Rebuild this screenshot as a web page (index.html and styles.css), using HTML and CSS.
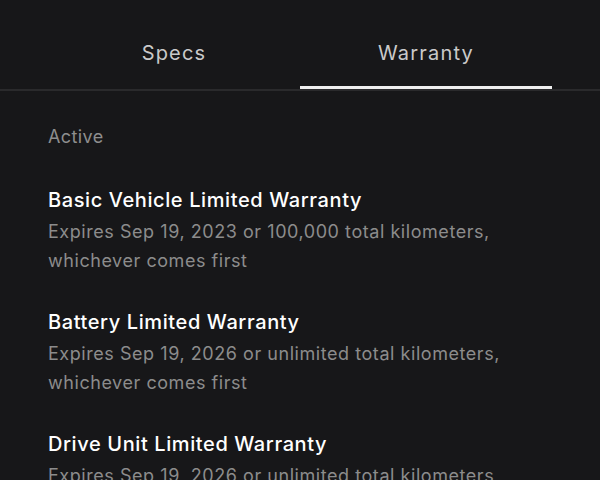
FILE: index.html
```html
<!DOCTYPE html>
<html>
<head>
<meta charset="utf-8">
<link rel="stylesheet" href="styles.css">
</head>
<body>
<div class="page">
  <div class="tabs">
    <div class="tab">Specs</div>
    <div class="tab active">Warranty</div>
  </div>
  <div class="content">
    <div class="section-label">Active</div>
    <div class="item">
      <div class="item-title">Basic Vehicle Limited Warranty</div>
      <div class="item-desc">Expires Sep 19, 2023 or 100,000 total kilometers, whichever comes first</div>
    </div>
    <div class="item">
      <div class="item-title">Battery Limited Warranty</div>
      <div class="item-desc">Expires Sep 19, 2026 or unlimited total kilometers, whichever comes first</div>
    </div>
    <div class="item">
      <div class="item-title">Drive Unit Limited Warranty</div>
      <div class="item-desc">Expires Sep 19, 2026 or unlimited total kilometers, whichever comes first</div>
    </div>
  </div>
</div>
</body>
</html>
```
FILE: styles.css
```css
html, body {
  margin: 0;
  padding: 0;
  background: #171719;
  height: 100%;
  overflow: hidden;
}
body {
  font-family: Inter, "Noto Sans", sans-serif;
  -webkit-font-smoothing: antialiased;
}
.page {
  width: 600px;
  height: 480px;
  overflow: hidden;
}
.tabs {
  display: flex;
  padding: 0 48px;
  border-bottom: 2px solid #2a2a2c;
  height: 89px;
  box-sizing: content-box;
}
.tab {
  flex: 1;
  text-align: center;
  font-size: 20px;
  line-height: 24px;
  letter-spacing: 1.2px;
  color: #cacaca;
  padding-top: 41px;
  box-sizing: border-box;
  position: relative;
}
.tab.active::after {
  content: "";
  position: absolute;
  left: 0;
  right: 0;
  bottom: 0;
  height: 3px;
  background: #efefef;
}
.content {
  padding: 34px 48px 0;
}
.section-label {
  font-size: 18px;
  color: #8e8e8e;
  line-height: 24px;
  letter-spacing: 0.4px;
  margin-bottom: 35px;
}
.item {
  margin-bottom: 31px;
}
.item-title {
  font-size: 20px;
  font-weight: 500;
  color: #ffffff;
  line-height: 32px;
  letter-spacing: 0.6px;
}
.item-desc {
  font-size: 18px;
  color: #8c8c8c;
  line-height: 29px;
  margin-top: 1px;
  letter-spacing: 0.55px;
  width: 470px;
}
```
